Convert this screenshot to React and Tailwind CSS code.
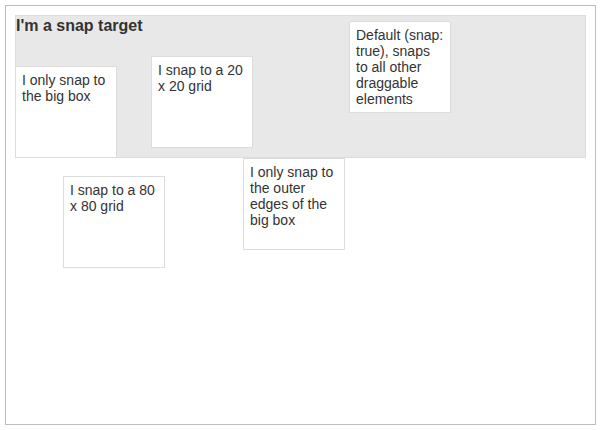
const boxes = [
  { text: 'I only snap to the big box', cls: 'left-[9px] top-[60px]' },
  { text: 'I snap to a 20 x 20 grid', cls: 'left-[145px] top-[50px]' },
  { text: 'Default (snap: true), snaps to all other draggable elements', cls: 'left-[343px] top-[15px]' },
  { text: 'I snap to a 80 x 80 grid', cls: 'left-[57px] top-[170px]' },
  { text: 'I only snap to the outer edges of the big box', cls: 'left-[237px] top-[152px]' },
]

export default function App() {
  return (
    <div className="w-[600px] h-[430px] bg-white p-[5px] font-['Liberation_Sans',Arial,sans-serif] text-[#333]">
      <div className="relative h-[420px] w-[591px] border border-[#bdbdbd] p-[9px]">
        {/* Snap target */}
        <div className="h-[143px] border border-[#dcdcdc] bg-[#e8e8e8]">
          <h1 className="text-base leading-[19px] font-bold text-[#333]">I'm a snap target</h1>
        </div>

        {/* Draggables */}
        {boxes.map((b) => (
          <div
            key={b.text}
            className={`absolute h-[92px] w-[102px] border border-[#dcdcdc] bg-white px-[6px] py-[5px] text-[14px] leading-[16px] ${b.cls}`}
          >
            {b.text}
          </div>
        ))}
      </div>
    </div>
  )
}
